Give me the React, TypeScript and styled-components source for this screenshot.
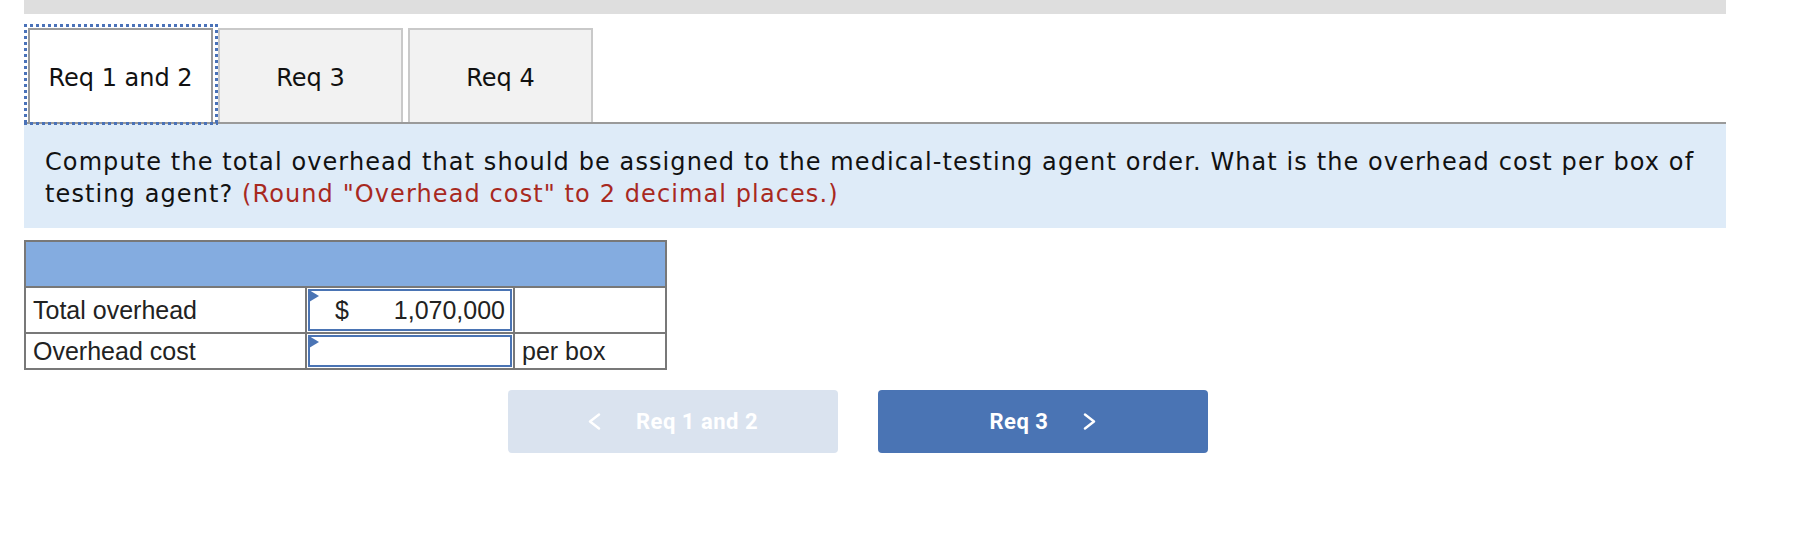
import styled, { createGlobalStyle } from 'styled-components';

const GlobalStyle = createGlobalStyle`
  body {
    margin: 0;
    background: #ffffff;
    font-family: 'DejaVu Sans', Verdana, sans-serif;
  }
`;

const Page = styled.div`
  width: 1702px;
  padding-left: 24px;
`;

const TopBar = styled.div`
  height: 14px;
  background: #dedede;
`;

const TabStrip = styled.div`
  display: flex;
  gap: 5px;
  margin-top: 14px;
  padding-left: 4px;
  border-bottom: 2px solid #9a9a9a;
`;

const Tab = styled.button<{ $active?: boolean }>`
  position: relative;
  width: 185px;
  height: 94px;
  box-sizing: border-box;
  border: 2px solid ${(p) => (p.$active ? '#9a9a9a' : '#c9c9c9')};
  border-bottom: none;
  background: ${(p) => (p.$active ? '#ffffff' : '#f2f2f2')};
  font-family: 'DejaVu Sans', Verdana, sans-serif;
  font-size: 24px;
  color: #111;
  padding: 4px 0 0;
  cursor: pointer;

  ${(p) =>
    p.$active &&
    `
    &::after {
      content: '';
      position: absolute;
      top: -6px;
      right: -7px;
      bottom: -3px;
      left: -6px;
      background:
        linear-gradient(90deg, #4a72b8 50%, transparent 50%) top left / 6px 3px repeat-x,
        linear-gradient(90deg, #4a72b8 50%, transparent 50%) bottom left / 6px 3px repeat-x,
        linear-gradient(180deg, #4a72b8 50%, transparent 50%) top left / 3px 6px repeat-y,
        linear-gradient(180deg, #4a72b8 50%, transparent 50%) top right / 3px 6px repeat-y;
      pointer-events: none;
    }
  `}
`;

const Prompt = styled.div`
  background: #deebf8;
  height: 104px;
  box-sizing: border-box;
  padding: 22px 21px 18px;
  font-size: 24px;
  line-height: 32px;
  letter-spacing: 1.1px;
  color: #111;
`;

const Hint = styled.span`
  color: #a8291f;
`;

const Grid = styled.table`
  margin-top: 12px;
  border-collapse: collapse;
  font-family: 'Liberation Sans', Arial, sans-serif;
  font-size: 25px;
  color: #222;
`;

const HeadCell = styled.th`
  height: 44px;
  padding: 0;
  background: #84ace0;
  border: 2px solid #787878;
`;

const Cell = styled.td<{ $w: number; $h: number }>`
  width: ${(p) => p.$w}px;
  height: ${(p) => p.$h}px;
  box-sizing: border-box;
  padding: 0 0 0 7px;
  border: 2px solid #787878;
  vertical-align: middle;
  line-height: 1;
`;

const InputCell = styled.td<{ $h: number }>`
  width: 208px;
  height: ${(p) => p.$h}px;
  box-sizing: border-box;
  padding: 1px;
  border: 2px solid #787878;
`;

const Entry = styled.div`
  position: relative;
  height: 100%;
  box-sizing: border-box;
  border: 2px solid #4a74b4;
  display: flex;
  align-items: center;
  justify-content: space-between;
  padding: 0 5px 0 25px;
  line-height: 1;

  &::before {
    content: '';
    position: absolute;
    left: -1px;
    top: -1px;
    border-left: 10px solid #4a74b4;
    border-top: 6px solid transparent;
    border-bottom: 6px solid transparent;
  }
`;

const NavRow = styled.div`
  display: flex;
  gap: 40px;
  margin-top: 20px;
  padding-left: 484px;
`;

const NavButton = styled.button<{ $primary?: boolean }>`
  width: 330px;
  height: 63px;
  border: none;
  border-radius: 4px;
  background: ${(p) => (p.$primary ? '#4a74b4' : '#dae3ef')};
  color: #ffffff;
  font-family: Roboto, 'Liberation Sans', sans-serif;
  font-weight: 700;
  font-size: 22px;
  letter-spacing: 0.5px;
  display: flex;
  align-items: center;
  justify-content: center;
  gap: 35px;
  cursor: pointer;
`;

const Chevron = ({ dir }: { dir: 'left' | 'right' }) => (
  <svg width="13" height="17" viewBox="0 0 13 17" fill="none">
    <polyline
      points={dir === 'left' ? '11,1.5 2,8.5 11,15.5' : '2,1.5 11,8.5 2,15.5'}
      stroke="#ffffff"
      strokeWidth="2.4"
      strokeLinecap="round"
      strokeLinejoin="round"
    />
  </svg>
);

export default function App() {
  return (
    <Page>
      <GlobalStyle />
      <TopBar />
      <TabStrip>
        <Tab $active>Req 1 and 2</Tab>
        <Tab>Req 3</Tab>
        <Tab>Req 4</Tab>
      </TabStrip>
      <Prompt>
        Compute the total overhead that should be assigned to the medical-testing agent order. What is the
        overhead cost per box of testing agent? <Hint>(Round "Overhead cost" to 2 decimal places.)</Hint>
      </Prompt>
      <Grid>
        <thead>
          <tr>
            <HeadCell colSpan={3} />
          </tr>
        </thead>
        <tbody>
          <tr>
            <Cell $w={281} $h={46}>Total overhead</Cell>
            <InputCell $h={46}>
              <Entry>
                <span>$</span>
                <span>1,070,000</span>
              </Entry>
            </InputCell>
            <Cell $w={152} $h={46} />
          </tr>
          <tr>
            <Cell $w={281} $h={36}>Overhead cost</Cell>
            <InputCell $h={36}>
              <Entry />
            </InputCell>
            <Cell $w={152} $h={36}>per box</Cell>
          </tr>
        </tbody>
      </Grid>
      <NavRow>
        <NavButton>
          <Chevron dir="left" />
          Req 1 and 2
        </NavButton>
        <NavButton $primary>
          Req 3
          <Chevron dir="right" />
        </NavButton>
      </NavRow>
    </Page>
  );
}
